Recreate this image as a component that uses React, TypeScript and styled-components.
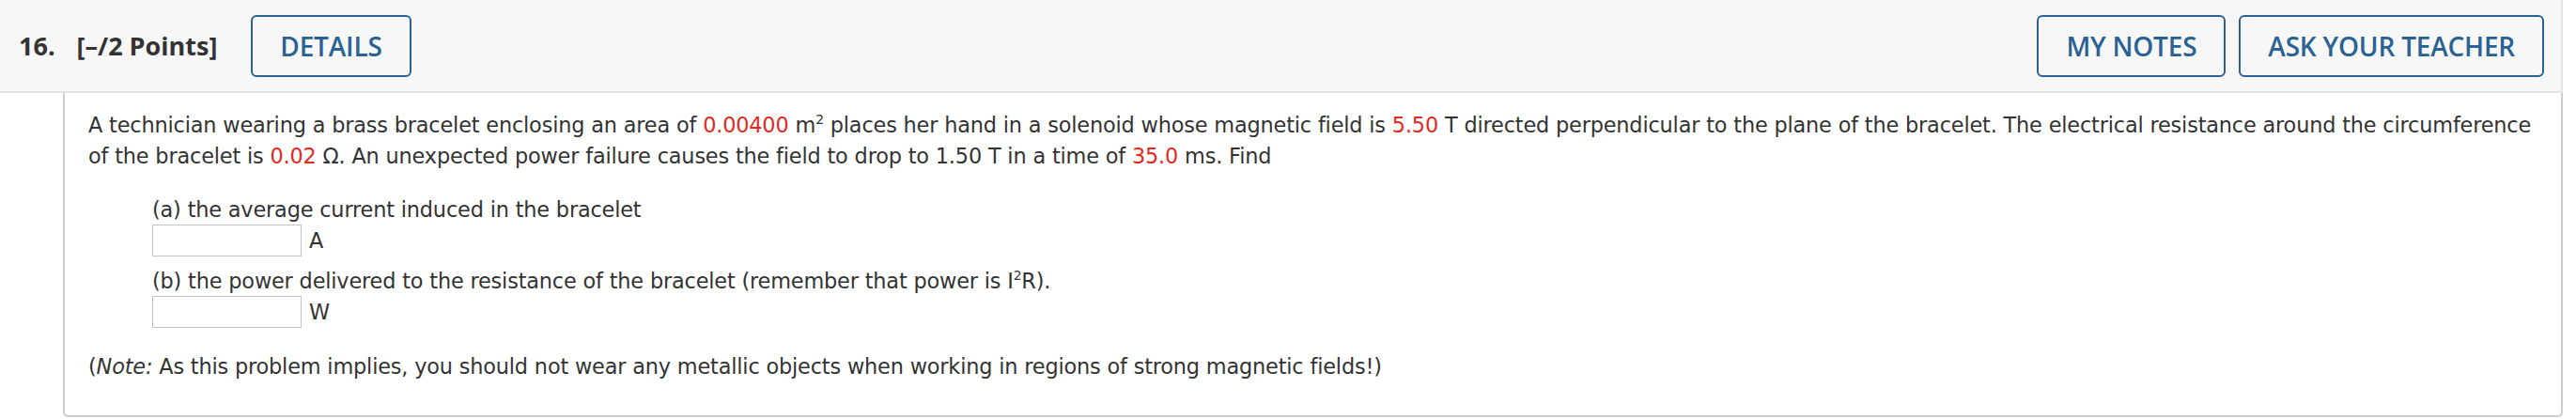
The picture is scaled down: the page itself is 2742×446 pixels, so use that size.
import React from "react";
import styled, { createGlobalStyle } from "styled-components";

const Global = createGlobalStyle`
  html, body { margin: 0; padding: 0; background: #ffffff; }
  body { font-family: "DejaVu Sans", Verdana, sans-serif; color: #333333; }
`;

const Page = styled.div`
  width: 2728px;
`;

const Header = styled.div`
  display: flex;
  align-items: center;
  height: 97px;
  padding: 0 18px 0 20px;
  background: #f7f7f7;
  border-bottom: 2px solid #e2e2e2;
  border-right: 2px solid #e6e6e6;
  font-family: "Open Sans", sans-serif;
`;

const Title = styled.div`
  display: flex;
  align-items: center;
  gap: 23px;
  font-size: 27px;
  font-weight: 700;
  color: #333333;
  margin-right: 36px;
`;

const Spacer = styled.div`
  flex: 1;
`;

const Actions = styled.div`
  display: flex;
  gap: 14px;
`;

const HeaderButton = styled.button`
  height: 66px;
  padding: 0 29px;
  border: 2px solid #2a6293;
  border-radius: 6px;
  background: transparent;
  color: #2a6293;
  font-family: "Open Sans", sans-serif;
  font-size: 28px;
  font-weight: 600;
  letter-spacing: -0.2px;
  cursor: pointer;
`;

const Body = styled.div`
  margin-left: 67px;
  padding: 18px 20px 35px 25px;
  border: 2px solid #cccccc;
  border-top: none;
  border-radius: 0 0 5px 5px;
  font-size: 22.4px;
  letter-spacing: -0.17px;
  line-height: 33px;
`;

const Paragraph = styled.p`
  margin: 0;
`;

const Value = styled.span`
  color: #e5291f;
`;

const Sup = styled.sup`
  font-size: 0.62em;
  line-height: 0;
  vertical-align: 0.62em;
`;

const Parts = styled.div`
  display: flex;
  flex-direction: column;
  gap: 10px;
  margin: 24px 0 0 68px;
`;

const Part = styled.div`
  display: flex;
  flex-direction: column;
`;

const AnswerRow = styled.div`
  display: flex;
  align-items: center;
  gap: 8px;
  margin-top: -1px;
`;

const AnswerInput = styled.input`
  box-sizing: border-box;
  width: 159px;
  height: 34px;
  border: 1px solid #c4c4c4;
  border-radius: 0;
  padding: 0 6px;
  font-family: inherit;
  font-size: 22px;
  background: #ffffff;
`;

const Unit = styled.span``;

const Note = styled.p`
  margin: 25px 0 0;
`;

const parts = [
  {
    label: <>(a) the average current induced in the bracelet</>,
    unit: "A",
  },
  {
    label: (
      <>
        (b) the power delivered to the resistance of the bracelet (remember
        that power is I<Sup>2</Sup>R).
      </>
    ),
    unit: "W",
  },
];

export default function App() {
  return (
    <Page>
      <Global />
      <Header>
        <Title>
          <span>16.</span>
          <span>[–/2 Points]</span>
        </Title>
        <HeaderButton>DETAILS</HeaderButton>
        <Spacer />
        <Actions>
          <HeaderButton>MY NOTES</HeaderButton>
          <HeaderButton>ASK YOUR TEACHER</HeaderButton>
        </Actions>
      </Header>
      <Body>
        <Paragraph>
          A technician wearing a brass bracelet enclosing an area of{" "}
          <Value>0.00400</Value> m<Sup>2</Sup> places her hand in a solenoid
          whose magnetic field is <Value>5.50</Value> T directed perpendicular
          to the plane of the bracelet. The electrical resistance around the
          circumference of the bracelet is <Value>0.02</Value> Ω. An
          unexpected power failure causes the field to drop to 1.50 T in a time
          of <Value>35.0</Value> ms. Find
        </Paragraph>
        <Parts>
          {parts.map((p, i) => (
            <Part key={i}>
              <div>{p.label}</div>
              <AnswerRow>
                <AnswerInput type="text" aria-label={`answer ${i}`} />
                <Unit>{p.unit}</Unit>
              </AnswerRow>
            </Part>
          ))}
        </Parts>
        <Note>
          (<i>Note:</i> As this problem implies, you should not wear any
          metallic objects when working in regions of strong magnetic fields!)
        </Note>
      </Body>
    </Page>
  );
}
